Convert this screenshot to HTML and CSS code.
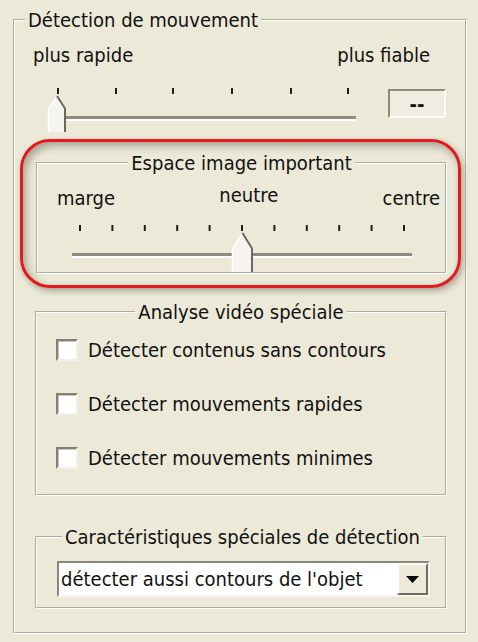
FILE: index.html
```html
<!DOCTYPE html>
<html lang="fr">
<head>
<meta charset="utf-8">
<title>Détection de mouvement</title>
<link rel="stylesheet" href="styles.css">
</head>
<body>
<fieldset class="group outer">
  <legend class="title">Détection de mouvement</legend>
  <div class="range-labels"><span>plus rapide</span><span>plus fiable</span></div>
  <div class="slider-row">
    <svg class="slider slider-speed" width="330" height="50" viewBox="0 0 330 50">
      <g fill="#1e1e1e">
        <rect x="17" y="3" width="2" height="6"/>
        <rect x="75" y="3" width="2" height="6"/>
        <rect x="132" y="3" width="2" height="6"/>
        <rect x="191" y="3" width="2" height="6"/>
        <rect x="250" y="3" width="2" height="6"/>
        <rect x="307" y="3" width="2" height="6"/>
      </g>
      <rect x="8" y="31" width="308" height="3" fill="#8e8c82"/>
      <rect x="8" y="34" width="308" height="2" fill="#ffffff"/>
      <polygon points="8,47 8,24 17,11 26,24 26,47" fill="#f5f4ef"/>
      <path d="M8.5,47 V24 L17,11.5" fill="none" stroke="#ffffff" stroke-width="1.5"/>
      <path d="M17,11 L25,23.5 V47" fill="none" stroke="#6a6862" stroke-width="2"/>
    </svg>
    <div class="value-box">--</div>
  </div>
  <div class="highlight">
    <fieldset class="group space">
      <legend class="title centered">Espace image important</legend>
      <div class="space-labels"><span>marge</span><span class="mid">neutre</span><span>centre</span></div>
      <svg class="slider slider-space" width="360" height="50" viewBox="0 0 360 50">
        <g fill="#1e1e1e">
          <rect x="19" y="3" width="2" height="6"/>
          <rect x="51.4" y="3" width="2" height="6"/>
          <rect x="83.8" y="3" width="2" height="6"/>
          <rect x="116.2" y="3" width="2" height="6"/>
          <rect x="148.6" y="3" width="2" height="6"/>
          <rect x="181" y="3" width="2" height="6"/>
          <rect x="213.4" y="3" width="2" height="6"/>
          <rect x="245.8" y="3" width="2" height="6"/>
          <rect x="278.2" y="3" width="2" height="6"/>
          <rect x="310.6" y="3" width="2" height="6"/>
          <rect x="343" y="3" width="2" height="6"/>
        </g>
        <rect x="12" y="31" width="340" height="3" fill="#8e8c82"/>
        <rect x="12" y="34" width="340" height="2" fill="#ffffff"/>
        <polygon points="172,50 172,27 182.5,11 193,27 193,50" fill="#f5f4ef"/>
        <path d="M172.5,50 V27 L182.5,11.5" fill="none" stroke="#ffffff" stroke-width="1.5"/>
        <path d="M182.5,11 L192,26.5 V50" fill="none" stroke="#6a6862" stroke-width="2"/>
      </svg>
    </fieldset>
  </div>
  <fieldset class="group analysis">
    <legend class="title centered">Analyse vidéo spéciale</legend>
    <div class="check-list">
      <label class="check-row"><span class="check-box"></span><span>Détecter contenus sans contours</span></label>
      <label class="check-row"><span class="check-box"></span><span>Détecter mouvements rapides</span></label>
      <label class="check-row"><span class="check-box"></span><span>Détecter mouvements minimes</span></label>
    </div>
  </fieldset>
  <fieldset class="group features">
    <legend class="title features-title">Caractéristiques spéciales de détection</legend>
    <div class="combo">
      <span class="combo-text">détecter aussi contours de l'objet</span>
      <span class="combo-button">
        <svg width="13" height="7" viewBox="0 0 13 7"><polygon points="0,0 13,0 6.5,7" fill="#000"/></svg>
      </span>
    </div>
  </fieldset>
</fieldset>
</body>
</html>
```

FILE: styles.css
```css
html, body {
  margin: 0;
  padding: 0;
}
body {
  width: 478px;
  height: 642px;
  background: #ece9d8;
  font-family: "DejaVu Sans Condensed", "DejaVu Sans", sans-serif;
  font-stretch: condensed;
  font-size: 20px;
  color: #111;
  overflow: hidden;
}
.group {
  margin: 0;
  padding: 0;
  min-width: 0;
  border: 2px groove #fffff4;
}
.title {
  padding: 0 3px;
  line-height: 24px;
  white-space: nowrap;
}
.centered {
  margin-left: auto;
  margin-right: auto;
}
.outer {
  margin: 8px 0 0 13px;
  width: 454px;
  box-sizing: border-box;
  padding-bottom: 23px;
}
.outer > .title {
  margin-left: 10px;
}
.range-labels {
  display: flex;
  justify-content: space-between;
  margin-top: 13px;
  padding: 0 35px 0 18px;
  line-height: 20px;
}
.slider-row {
  display: flex;
  align-items: flex-start;
  margin-top: 20px;
  padding-left: 25px;
}
.slider {
  display: block;
  overflow: visible;
}
.value-box {
  box-sizing: border-box;
  width: 58px;
  height: 29px;
  margin: 4px 0 0 18px;
  border-top: 2px solid #8b887c;
  border-left: 2px solid #8b887c;
  border-right: 2px solid #fbfaf5;
  border-bottom: 2px solid #fbfaf5;
  display: flex;
  align-items: center;
  justify-content: center;
  background: #efede2;
  line-height: 1;
  font-weight: bold;
}
.highlight {
  margin: 4px 4px 0 5px;
  border: 3px solid #e2191e;
  border-radius: 30px;
  padding: 9px 11px 11px 13px;
  box-shadow: 2px 3px 6px rgba(60, 55, 40, 0.4), inset 3px 4px 9px rgba(60, 55, 40, 0.4);
}
.space-labels {
  display: flex;
  justify-content: space-between;
  align-items: flex-start;
  margin-top: 13px;
  padding: 0 5px 0 19px;
  line-height: 20px;
}
.space-labels .mid {
  margin-top: -3px;
}
.slider-space {
  margin: 14px 0 0 22px;
}
.analysis {
  margin: 12px 18px 0 20px;
  padding-bottom: 25px;
}
.check-list {
  display: flex;
  flex-direction: column;
  gap: 32px;
  margin-top: 15px;
  padding-left: 19px;
}
.check-row {
  display: flex;
  align-items: center;
  gap: 10px;
  height: 22px;
  line-height: 22px;
}
.check-box {
  box-sizing: border-box;
  width: 22px;
  height: 22px;
  flex: none;
  background: #fff;
  border-top: 2px solid #848174;
  border-left: 2px solid #848174;
  border-right: 2px solid #f3f2ea;
  border-bottom: 2px solid #f3f2ea;
  box-shadow: inset 1px 1px 0 #c9c6b8;
}
.features {
  margin: 29px 18px 0 20px;
  padding-bottom: 10px;
}
.features-title {
  margin-left: 25px;
}
.combo {
  box-sizing: border-box;
  display: flex;
  align-items: stretch;
  width: 373px;
  height: 36px;
  margin: 12px 0 0 20px;
  background: #fff;
  border-top: 2px solid #8b887c;
  border-left: 2px solid #8b887c;
  border-right: 2px solid #f7f6f0;
  border-bottom: 2px solid #f7f6f0;
}
.combo-text {
  flex: 1;
  padding-left: 2px;
  line-height: 32px;
  white-space: nowrap;
  overflow: hidden;
}
.combo-button {
  box-sizing: border-box;
  width: 31px;
  flex: none;
  display: flex;
  align-items: center;
  justify-content: center;
  background: #ece9d8;
  border-top: 2px solid #fdfcf8;
  border-left: 2px solid #fdfcf8;
  border-right: 2px solid #6f6d65;
  border-bottom: 2px solid #6f6d65;
}
```
